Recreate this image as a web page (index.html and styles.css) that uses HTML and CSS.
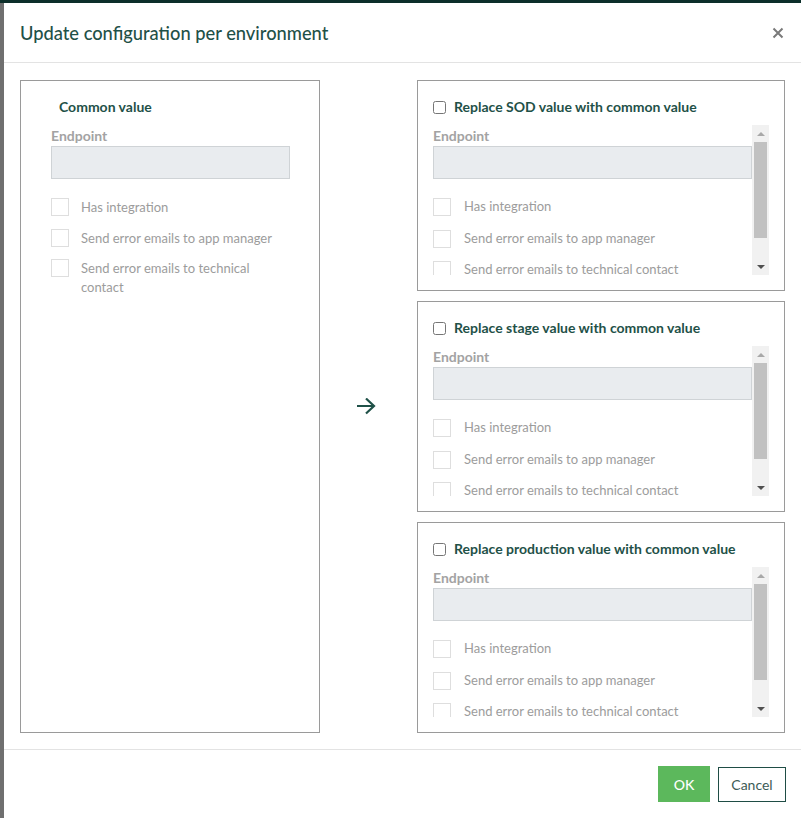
FILE: index.html
```html
<!DOCTYPE html>
<html>
<head>
<meta charset="utf-8">
<link rel="stylesheet" href="styles.css">
</head>
<body>
<div class="topbar"></div>
<div class="modal">
  <div class="modal-header">
    <h1 class="title">Update configuration per environment</h1>
    <svg class="close" width="12" height="12" viewBox="0 0 12 12"><path d="M1.5 1.5 L10.5 10.5 M10.5 1.5 L1.5 10.5" stroke="#7a7a7a" stroke-width="2" fill="none"/></svg>
  </div>
  <div class="modal-body">
    <div class="panel left">
      <div class="panel-head common">Common value</div>
      <div class="fields">
        <div class="label">Endpoint</div>
        <div class="input"></div>
        <div class="rows">
          <div class="row"><span class="box"></span><span class="text">Has integration</span></div>
          <div class="row"><span class="box"></span><span class="text">Send error emails to app manager</span></div>
          <div class="row"><span class="box"></span><span class="text">Send error emails to technical contact</span></div>
        </div>
      </div>
    </div>
    <div class="arrow-col">
      <svg width="20" height="18" viewBox="0 0 20 18"><path d="M1 8 H18 M10 0.5 L18 8 L10 15.5" stroke="#1f5148" stroke-width="2.2" fill="none"/></svg>
    </div>
    <div class="right-col">
      <div class="panel env">
        <div class="panel-head"><input type="checkbox" class="cb"><span>Replace SOD value with common value</span></div>
        <div class="scroll">
          <div class="scroll-content">
            <div class="label">Endpoint</div>
            <div class="input"></div>
            <div class="rows">
              <div class="row"><span class="box"></span><span class="text">Has integration</span></div>
              <div class="row"><span class="box"></span><span class="text">Send error emails to app manager</span></div>
              <div class="row"><span class="box"></span><span class="text">Send error emails to technical contact</span></div>
            </div>
          </div>
          <div class="sbar"><div class="sbtn"><span class="up"></span></div><div class="track"><div class="thumb"></div></div><div class="sbtn"><span class="down"></span></div></div>
        </div>
      </div>
      <div class="panel env">
        <div class="panel-head"><input type="checkbox" class="cb"><span>Replace stage value with common value</span></div>
        <div class="scroll">
          <div class="scroll-content">
            <div class="label">Endpoint</div>
            <div class="input"></div>
            <div class="rows">
              <div class="row"><span class="box"></span><span class="text">Has integration</span></div>
              <div class="row"><span class="box"></span><span class="text">Send error emails to app manager</span></div>
              <div class="row"><span class="box"></span><span class="text">Send error emails to technical contact</span></div>
            </div>
          </div>
          <div class="sbar"><div class="sbtn"><span class="up"></span></div><div class="track"><div class="thumb"></div></div><div class="sbtn"><span class="down"></span></div></div>
        </div>
      </div>
      <div class="panel env">
        <div class="panel-head"><input type="checkbox" class="cb"><span>Replace production value with common value</span></div>
        <div class="scroll">
          <div class="scroll-content">
            <div class="label">Endpoint</div>
            <div class="input"></div>
            <div class="rows">
              <div class="row"><span class="box"></span><span class="text">Has integration</span></div>
              <div class="row"><span class="box"></span><span class="text">Send error emails to app manager</span></div>
              <div class="row"><span class="box"></span><span class="text">Send error emails to technical contact</span></div>
            </div>
          </div>
          <div class="sbar"><div class="sbtn"><span class="up"></span></div><div class="track"><div class="thumb"></div></div><div class="sbtn"><span class="down"></span></div></div>
        </div>
      </div>
    </div>
  </div>
  <div class="modal-footer">
    <button class="btn ok">OK</button>
    <button class="btn cancel">Cancel</button>
  </div>
</div>
</body>
</html>
```

FILE: styles.css
```css
* { box-sizing: border-box; }
html, body { margin: 0; padding: 0; }
body {
  background: #6f6f6f;
  font-family: Lato, "Noto Sans", sans-serif;
  width: 801px;
  height: 818px;
  overflow: hidden;
}
.topbar { height: 3px; background: #0c2f2a; }
.modal {
  margin-left: 4px;
  background: #fff;
  height: 815px;
}
.modal-header {
  height: 60px;
  border-bottom: 1px solid #e3e3e3;
  display: flex;
  align-items: center;
  justify-content: space-between;
  padding: 0 17px 0 16px;
}
.title {
  margin: 0;
  font-size: 18.3px;
  font-weight: 500;
  color: #1f5148;
  line-height: 24px;
}
.close { display: block; }
.modal-body {
  display: flex;
  padding: 17px 16px 16px;
  height: 687px;
  border-bottom: 1px solid #e3e3e3;
}
.panel { border: 1px solid #9a9a9a; background: #fff; }
.left {
  width: 300px;
  padding: 16px 29px 16px 30px;
}
.panel-head {
  height: 20px;
  line-height: 20px;
  font-size: 14px;
  font-weight: 700;
  color: #1f5148;
  margin-bottom: 8px;
  display: flex;
  align-items: center;
  white-space: nowrap;
}
.common { margin-left: 8px; }
.cb {
  width: 13px;
  height: 13px;
  margin: 0 8px 0 0;
  flex: none;
}
.label {
  font-size: 14px;
  font-weight: 700;
  color: #a3a3a3;
  line-height: 21px;
}
.input {
  height: 33px;
  background: #e9ecef;
  border: 1px solid #cfd3d6;
}
.rows { margin-top: 12px; }
.row {
  display: flex;
  align-items: flex-start;
  padding-top: 7px;
  min-height: 30.5px;
}
.env .row { min-height: 31.5px; }
.box {
  flex: none;
  width: 18px;
  height: 18px;
  border: 1px solid #dedede;
  background: #fff;
  margin-right: 12px;
}
.text {
  font-size: 13px;
  line-height: 19px;
  color: #9c9c9c;
  margin-top: 0;
}
.env .text { margin-top: -1px; }
.env .box { margin-right: 13px; }
.arrow-col {
  width: 97px;
  display: flex;
  align-items: center;
  justify-content: center;
  padding-right: 5px;
}
.arrow-col svg { display: block; }
.right-col {
  flex: 1;
  display: flex;
  flex-direction: column;
  gap: 10px;
}
.env {
  height: 211px;
  flex: none;
  padding: 16px 15px 14px 15px;
}
.scroll {
  height: 150px;
  display: flex;
}
.scroll-content {
  flex: 1;
  min-width: 0;
  overflow: hidden;
}
.sbar {
  width: 17px;
  flex: none;
  background: #f1f1f1;
  display: flex;
  flex-direction: column;
}
.sbtn {
  height: 17px;
  display: flex;
  align-items: center;
  justify-content: center;
}
.up {
  width: 0; height: 0;
  border-left: 4px solid transparent;
  border-right: 4px solid transparent;
  border-bottom: 4px solid #a8a8a8;
}
.down {
  width: 0; height: 0;
  border-left: 4px solid transparent;
  border-right: 4px solid transparent;
  border-top: 4px solid #505050;
}
.track { flex: 1; }
.thumb {
  height: 96px;
  margin: 0 2px;
  background: #c1c1c1;
}
.modal-footer {
  display: flex;
  justify-content: flex-end;
  gap: 8px;
  padding: 16px 15px 0 0;
}
.btn {
  font-family: Lato, "Noto Sans", sans-serif;
  font-size: 14px;
  margin: 0;
  cursor: pointer;
}
.ok {
  width: 52px;
  height: 36px;
  background: #5cb85c;
  border: none;
  color: #fff;
  font-weight: 500;
}
.cancel {
  width: 68px;
  height: 35px;
  margin-top: 1px;
  background: #fff;
  border: 1px solid #1f4d45;
  color: #3d5c57;
}
```
